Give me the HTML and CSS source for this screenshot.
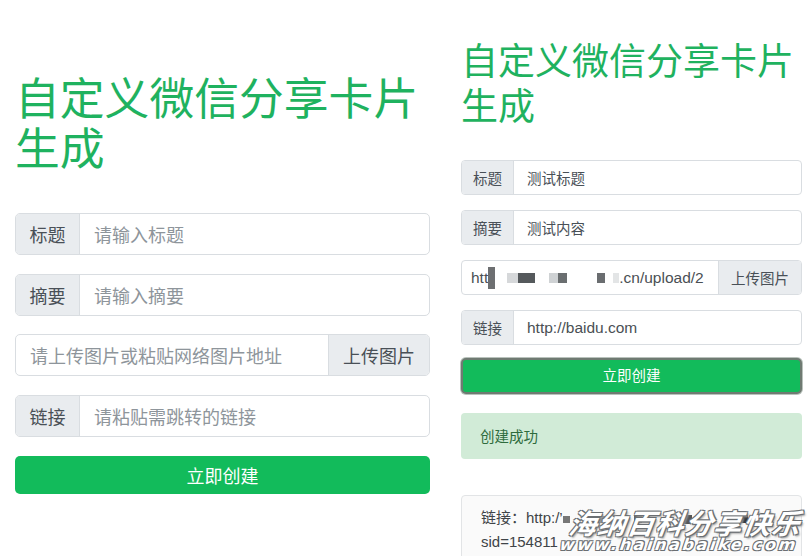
FILE: index.html
```html
<!DOCTYPE html>
<html lang="zh-CN">
<head>
<meta charset="utf-8">
<title>自定义微信分享卡片生成</title>
<link rel="stylesheet" href="styles.css">
</head>
<body>
<div class="page">
  <section class="panel left">
    <h1 class="title">自定义微信分享卡片<br>生成</h1>
    <div class="form">
      <div class="group">
        <span class="addon">标题</span>
        <span class="field placeholder">请输入标题</span>
      </div>
      <div class="group">
        <span class="addon">摘要</span>
        <span class="field placeholder">请输入摘要</span>
      </div>
      <div class="group">
        <span class="field first placeholder">请上传图片或粘贴网络图片地址</span>
        <span class="addon btn-addon">上传图片</span>
      </div>
      <div class="group">
        <span class="addon">链接</span>
        <span class="field placeholder">请粘贴需跳转的链接</span>
      </div>
      <div class="submit">立即创建</div>
    </div>
  </section>

  <section class="panel right">
    <h1 class="title">自定义微信分享卡片<br>生成</h1>
    <div class="form">
      <div class="group">
        <span class="addon">标题</span>
        <span class="field">测试标题</span>
      </div>
      <div class="group">
        <span class="addon">摘要</span>
        <span class="field">测试内容</span>
      </div>
      <div class="group">
        <span class="field first url">htt<i class="blur b1"></i><i class="blur b2"></i><i class="blur b3"></i><i class="blur b4"></i><i class="blur b5"></i>.cn/upload/2</span>
        <span class="addon btn-addon">上传图片</span>
      </div>
      <div class="group">
        <span class="addon">链接</span>
        <span class="field url">http://baidu.com</span>
      </div>
      <div class="submit focused">立即创建</div>
      <div class="alert">创建成功</div>
      <div class="result">
        <div class="result-line">链接：http:/’<i class="blur r1"></i><i class="blur r2"></i><i class="blur r3"></i><i class="blur r4"></i><i class="blur r5"></i>p?</div>
        <div class="result-line">sid=154811</div>
      </div>
    </div>
    <div class="watermark">
      <div class="wm-cn">海纳百科分享快乐</div>
      <div class="wm-en">www.hainabaike.com</div>
    </div>
  </section>
</div>
</body>
</html>
```

FILE: styles.css
```css
* { box-sizing: border-box; }

html, body {
  margin: 0;
  padding: 0;
  background: #ffffff;
}

body {
  width: 812px;
  height: 556px;
  overflow: hidden;
  font-family: "Noto Sans CJK SC", "Noto Sans", "Liberation Sans", sans-serif;
  color: #495057;
}

.page {
  display: grid;
  grid-template-columns: 446px 366px;
  height: 556px;
}

.panel {
  position: relative;
  overflow: hidden;
}

.title {
  margin: 0;
  font-weight: 400;
  color: #1fb25f;
}

/* ---------- left panel ---------- */
.left {
  padding: 71px 16px 0 15px;
}

.left .title {
  font-size: 44.8px;
  line-height: 50px;
}

.left .form {
  margin-top: 42px;
  display: flex;
  flex-direction: column;
  gap: 18.7px;
}

.group {
  display: flex;
  border: 1px solid #d9dde1;
  border-radius: 5px;
  overflow: hidden;
  background: #ffffff;
}

.addon {
  flex: none;
  display: flex;
  align-items: center;
  justify-content: center;
  background: #e9ecef;
  color: #495057;
}

.field {
  flex: 1;
  display: flex;
  align-items: center;
  white-space: nowrap;
  overflow: hidden;
  color: #495057;
  border-left: 1px solid #d9dde1;
}

.field.first {
  border-left: none;
  border-right: 1px solid #d9dde1;
}

.placeholder { color: #8e959b; }

.left .group { height: 42px; }
.left .addon { width: 63px; font-size: 18px; }
.left .field { padding-left: 14px; font-size: 18px; }
.left .field.first { padding-left: 14px; }
.left .btn-addon { width: 100px; }

.submit {
  display: flex;
  align-items: center;
  justify-content: center;
  background: #12bb5b;
  color: #ffffff;
  border-radius: 5px;
}

.left .submit {
  height: 38px;
  font-size: 18px;
}

/* ---------- right panel ---------- */
.right {
  padding: 37px 10px 0 15px;
}

.right .title {
  font-size: 37px;
  line-height: 45px;
}

.right .form {
  margin-top: 33px;
  display: flex;
  flex-direction: column;
  gap: 15px;
}

.right .group { height: 35px; border-radius: 4px; }
.right .addon { width: 51px; font-size: 14.5px; }
.right .field { padding-left: 13px; font-size: 14.5px; }
.right .field.first { padding-left: 9px; }
.right .field.url { font-family: "Liberation Sans", "Noto Sans CJK SC", sans-serif; font-size: 15.5px; color: #4a4f54; }
.right .btn-addon { width: 82px; }

.right .submit {
  height: 36px;
  font-size: 14.5px;
  margin-top: -2px;
  padding-bottom: 3px;
  border: 2px solid #6f7a72;
  border-radius: 5px;
  box-shadow: 0 0 0 1px #b9c2bc;
}

.blur {
  display: inline-block;
  height: 10px;
  vertical-align: middle;
  background: #cfd2d4;
}
.b1 { width: 7px; height: 22px; background: #6d6f71; margin-right: 12px; }
.b2 { width: 28px; background: linear-gradient(90deg, #d6d8da 40%, #55595c 40%); margin-right: 14px; }
.b3 { width: 18px; background: linear-gradient(90deg, #cfd2d4 50%, #6a6e70 50%); margin-right: 30px; }
.b4 { width: 8px; background: #6a6d70; margin-right: 8px; }
.b5 { width: 6px; background: #e3e5e6; margin-right: 0; }

.alert {
  margin-top: 4px;
  height: 46px;
  display: flex;
  align-items: center;
  padding-left: 19px;
  padding-bottom: 2px;
  background: #d1ebd7;
  color: #2e6b3d;
  font-size: 14.5px;
  border-radius: 4px;
}

.result {
  margin-top: 21px;
  border: 1px solid #e2e4e6;
  border-radius: 4px;
  background: #fafafa;
  padding: 10px 19px 10px 19px;
  font-size: 15px;
  line-height: 24px;
  color: #3f4448;
}

.result-line {
  font-family: "Liberation Sans", "Noto Sans CJK SC", sans-serif;
  white-space: nowrap;
}

.r1 { width: 7px; height: 7px; background: #777; margin-right: 18px; }
.r2 { width: 22px; height: 7px; background: #8a8d90; margin-right: 24px; }
.r3 { width: 8px; height: 8px; background: #666; margin-right: 40px; }
.r4 { width: 10px; height: 9px; background: #555; margin-right: 46px; }
.r5 { width: 10px; height: 8px; background: #333; margin-right: 2px; }

.watermark {
  position: absolute;
  right: 12px;
  bottom: 3px;
  text-align: right;
  color: #ffffff;
  font-style: italic;
  transform: skewX(-8deg);
}

.wm-cn {
  font-family: "Noto Sans CJK SC", sans-serif;
  font-weight: 700;
  font-size: 28px;
  line-height: 27px;
  letter-spacing: 1px;
  text-shadow: -1px -1px 0 #6b6f73, 1px -1px 0 #6b6f73, -1px 1px 0 #6b6f73, 1px 1px 0 #6b6f73, 2px 2px 2px #999;
}

.wm-en {
  font-family: "DejaVu Sans", sans-serif;
  font-weight: 700;
  font-size: 16px;
  line-height: 17px;
  letter-spacing: 2.6px;
  text-shadow: -1px -1px 0 #6b6f73, 1px -1px 0 #6b6f73, -1px 1px 0 #6b6f73, 1px 1px 0 #6b6f73;
}
```
